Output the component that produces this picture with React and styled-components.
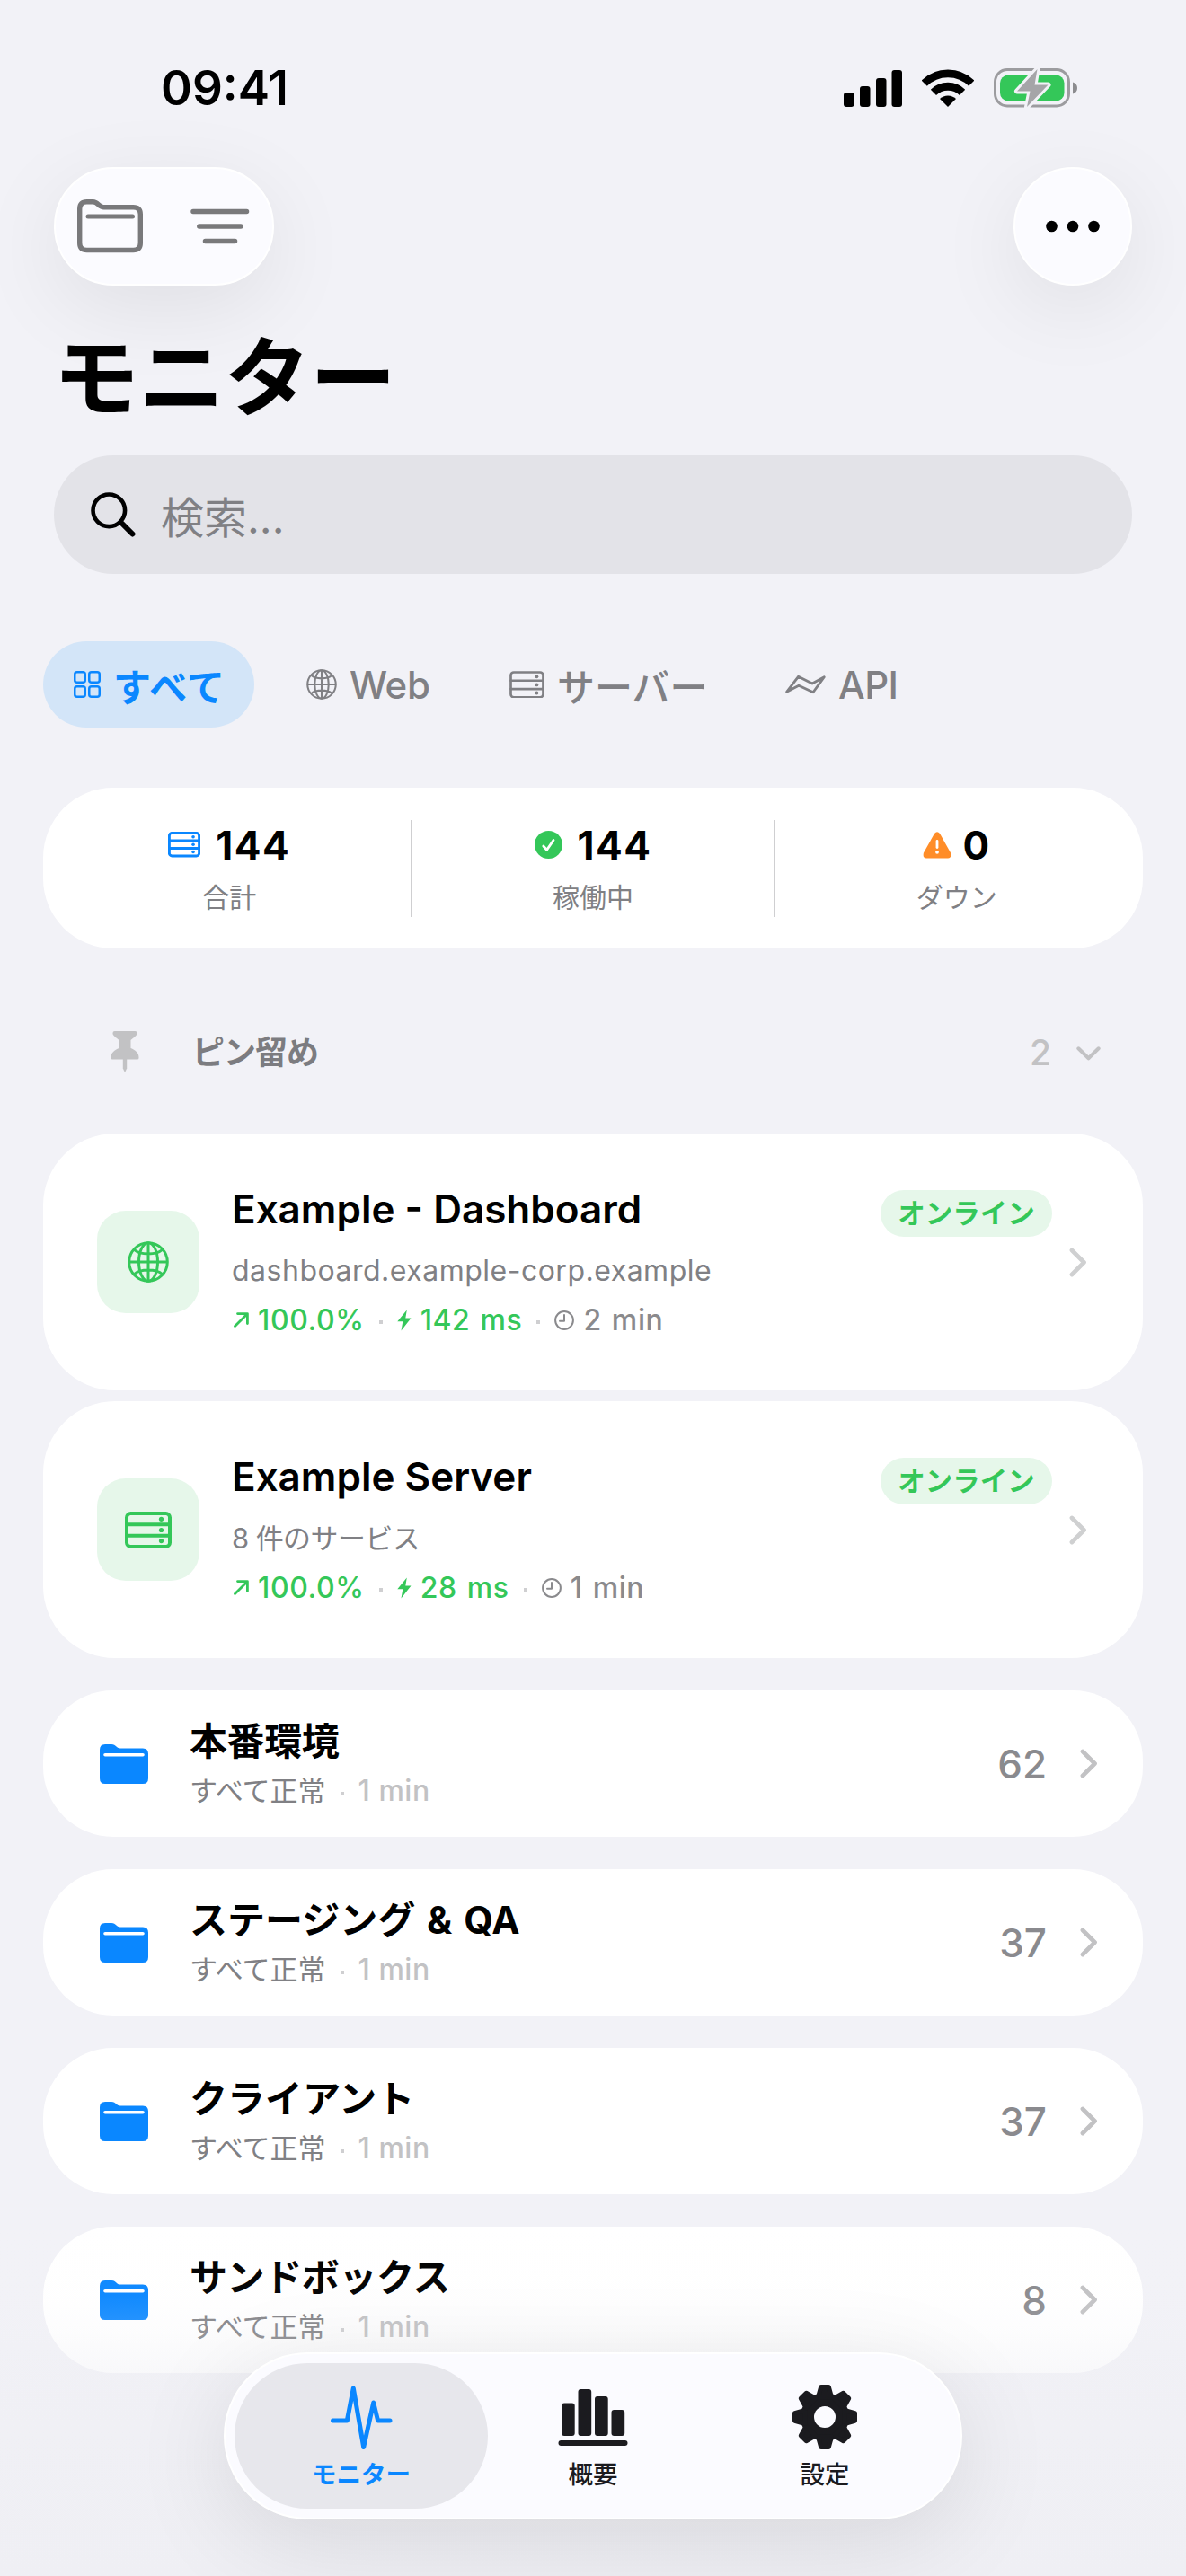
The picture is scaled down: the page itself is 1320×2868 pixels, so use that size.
import styled, { createGlobalStyle, css } from "styled-components";

const GlobalStyle = createGlobalStyle`
    * {
        box-sizing: border-box;
    }
    body {
        margin: 0;
        background: #f2f2f7;
        font-family: Inter, "Noto Sans CJK JP", sans-serif;
    }
    svg {
        display: block;
        flex-shrink: 0;
    }
`;

const blue = "#0a87ff";
const green = "#34c759";
const gray = "#808084";
const lightGray = "#c2c2c4";

const Screen = styled.main`
    position: relative;
    display: flex;
    flex-direction: column;
    width: 1320px;
    height: 2868px;
    overflow: hidden;
    background: #f2f2f7;
    color: #000;
    white-space: nowrap;
`;
const StatusBar = styled.div`
    display: flex;
    align-items: center;
    justify-content: space-between;
    height: 186px;
    padding: 10px 120px 0 179px;
`;
const Time = styled.span`
    font-size: 53px;
    font-weight: 600;
    line-height: 60px;
`;
const StatusIcons = styled.div`
    display: flex;
    align-items: center;
    gap: 22px;
`;
const Toolbar = styled.div`
    display: flex;
    justify-content: space-between;
    padding: 0 60px;
`;
const glass = css`
    background: #fbfbff;
    border: 2px solid #fff;
    box-shadow: 0 24px 96px rgba(0, 0, 0, 0.08);
`;
const ToolGroup = styled.div`
    ${glass}
    display: flex;
    align-items: center;
    justify-content: space-between;
    width: ${props => props.$round ? 132 : 245}px;
    height: 132px;
    padding: ${props => props.$round ? "0 34px" : "0 25px 0 24px"};
    border-radius: 66px;
`;
const Title = styled.h1`
    margin: 47px 0 32px 59px;
    font-size: 96px;
    font-weight: 700;
    line-height: 110px;
    letter-spacing: -0.7px;
`;
const Search = styled.div`
    display: flex;
    align-items: center;
    gap: 28px;
    height: 132px;
    margin: 0 60px;
    padding: 0 41px;
    border-radius: 66px;
    background: #e3e3e8;
    color: ${gray};
    font-size: 48px;
`;
const Chips = styled.div`
    display: flex;
    gap: 24px;
    margin: 75px 48px 0;
`;
const Chip = styled.div`
    display: flex;
    align-items: center;
    gap: 14px;
    width: ${props => props.$width}px;
    height: 96px;
    padding-left: 34px;
    border-radius: 48px;
    background: ${props => props.$active ? "#d3e5f8" : "transparent"};
    color: ${props => props.$active ? blue : gray};
    font-size: 42px;
    font-weight: ${props => props.$active ? 700 : 500};
`;
const ChipText = styled.span`
    letter-spacing: ${props => props.$spacing || 0}px;
`;
const Stats = styled.section`
    display: flex;
    align-items: center;
    height: 179px;
    margin: 67px 48px 0;
    padding: 0 6px;
    border-radius: 78px;
    background: #fff;
`;
const Stat = styled.div`
    display: flex;
    flex: 1;
    flex-direction: column;
    align-items: center;
    height: 108px;
    padding-top: 1px;

    & + & {
        border-left: 2px solid #cfcfd1;
    }
`;
const StatValue = styled.div`
    display: flex;
    align-items: center;
    gap: ${props => props.$gap || 17}px;
    height: 54px;
    font-size: 44px;
    font-weight: 700;
    letter-spacing: 1.5px;

    svg {
        color: ${blue};
    }
`;
const StatLabel = styled.div`
    margin-top: 9px;
    font-size: 30px;
    line-height: 44px;
    color: ${gray};
`;
const SectionHeader = styled.div`
    display: flex;
    align-items: center;
    height: 206px;
    padding: 24px 95px 0 123px;
    color: ${lightGray};
`;
const SectionTitle = styled.h2`
    flex: 1;
    margin: -4px 0 0 59px;
    font-size: 36px;
    font-weight: 700;
    letter-spacing: -1px;
    color: #7c7c80;
`;
const SectionCount = styled.span`
    margin-right: 28px;
    font-size: 39px;
    font-weight: 500;
`;
const List = styled.div`
    display: flex;
    flex-direction: column;
    gap: ${props => props.$gap}px;
    margin: ${props => props.$top || 0}px 48px 0;
`;
const MonitorCard = styled.article`
    display: flex;
    align-items: center;
    height: 286px;
    padding: 0 62px 0 60px;
    border-radius: 80px;
    background: #fff;
`;
const IconTile = styled.div`
    display: grid;
    place-items: center;
    width: 114px;
    height: 114px;
    margin-right: 36px;
    border-radius: 32px;
    background: #e6f7ea;
    color: ${green};
`;
const MonitorInfo = styled.div`
    flex: 1;
`;
const MonitorName = styled.h3`
    margin: -1px 0 0;
    font-size: 44px;
    font-weight: 600;
    line-height: 54px;
`;
const MonitorSub = styled.p`
    margin: 21px 0 13px;
    font-size: ${props => props.$size || 32}px;
    line-height: 42px;
    letter-spacing: ${props => props.$spacing || 0}px;
    color: ${gray};
`;
const Metrics = styled.div`
    display: flex;
    align-items: center;
    height: 42px;
    padding-left: 2px;
    font-size: 32px;
    font-weight: 500;
    letter-spacing: 0.6px;
    word-spacing: 2px;
`;
const Metric = styled.span`
    display: flex;
    align-items: center;
    gap: 10px;
    color: ${props => props.$muted ? "#8a8a8d" : green};
`;
const Dot = styled.i`
    width: 4px;
    height: 4px;
    margin: 5px 16px 0;
    background: #cfcfd1;
`;
const Badge = styled.span`
    align-self: flex-start;
    width: 191px;
    height: 52px;
    margin: 63px 19px 0 0;
    border-radius: 26px;
    background: #e6f7ea;
    color: ${green};
    font-size: 30.5px;
    font-weight: 700;
    line-height: 51px;
    text-align: center;
`;
const FolderRow = styled.article`
    display: flex;
    align-items: center;
    height: 163px;
    padding: 0 50px 0 63px;
    border-radius: 78px;
    background: #fff;
    color: ${blue};
`;
const FolderText = styled.div`
    flex: 1;
    margin-left: 46px;
    color: #000;
`;
const FolderName = styled.h3`
    margin: 0;
    font-size: 42px;
    font-weight: 700;
    line-height: 56px;
    letter-spacing: ${props => props.$spacing || 0}px;
    word-spacing: 3px;
`;
const FolderSub = styled.div`
    display: flex;
    align-items: center;
    margin-top: 5px;
    font-size: 31px;
    line-height: 44px;
    color: ${gray};
`;
const Age = styled.span`
    font-size: 32px;
    font-weight: 500;
    letter-spacing: 0.5px;
    color: ${lightGray};
`;
const Count = styled.span`
    margin-right: 37px;
    font-size: 44px;
    font-weight: 500;
    color: #8a8a8e;
`;
// sits over the scrolling list
const BottomFade = styled.div`
    position: absolute;
    right: 0;
    bottom: 0;
    left: 0;
    height: 390px;
    background: linear-gradient(
        rgba(238, 238, 243, 0),
        rgba(238, 238, 243, 0.03) 20%,
        rgba(238, 238, 243, 0.15) 30%,
        rgba(238, 238, 243, 0.4) 42%,
        rgba(238, 238, 243, 0.75)
    );
`;
const TabBar = styled.nav`
    ${glass}
    position: absolute;
    bottom: 63px;
    left: 249px;
    display: flex;
    width: 822px;
    height: 186px;
    padding: 10px;
    border-radius: 93px;
    box-shadow: 0 24px 110px rgba(0, 0, 0, 0.1);
`;
const Tab = styled.div`
    display: flex;
    flex-direction: column;
    align-items: center;
    width: 282px;
    height: 162px;
    padding-top: 24px;
    border-radius: 81px;
    background: ${props => props.$active ? "#e7e7ec" : "transparent"};
    color: ${props => props.$active ? blue : "#1b1b1f"};
    font-size: 27.5px;
    font-weight: ${props => props.$active ? 700 : 500};

    & + & {
        margin-left: -24px;
    }
`;
const TabLabel = styled.span`
    margin-top: 8px;
    line-height: 40px;
`;

const Line = props => <path fill="none" stroke="currentColor" strokeLinecap="round" strokeLinejoin="round" {...props} />;

const Signal = () => (
    <svg width="65" height="42">
        <rect x="0" y="26" width="11.5" height="16" rx="3" />
        <rect x="18" y="19" width="11.5" height="23" rx="3" />
        <rect x="36" y="10" width="11.5" height="32" rx="3" />
        <rect x="53.5" y="1" width="11.5" height="41" rx="3" />
    </svg>
);
const Wifi = () => (
    <svg width="58" height="42" viewBox="0 0 58 42">
        <path d="M2.7 15.7A37.2 37.2 0 0 1 55.3 15.7M12.9 25.9A22.8 22.8 0 0 1 45.1 25.9" fill="none" stroke="#000" strokeWidth="8.8" />
        <path d="M20 33A13 13 0 0 1 38 33L29 42Z" />
    </svg>
);
const Battery = () => (
    <svg width="94" height="46" viewBox="0 0 94 46">
        <rect x="1.5" y="2.5" width="82" height="40.5" rx="13.5" fill="none" stroke="#9c9c9f" strokeWidth="3" />
        <path d="M88 16.5c3.5 1 5 3.5 5 6.5s-1.5 5.5-5 6.5z" fill="#8c8c8f" />
        <rect x="7" y="8.5" width="71.5" height="29" rx="9" fill={green} />
        <path d="M48.5 2L26 26.5H40.5L37 44L60.5 19.5H45.5Z" fill="#a5a5a8" stroke="#f2f2f7" strokeWidth="6" strokeLinejoin="round" paintOrder="stroke" />
    </svg>
);
const FolderOutline = () => (
    <svg width="73" height="60" viewBox="0 0 73 60" color="#79797b">
        <Line strokeWidth="5.4" d="M2.7 10.7Q2.7 2.7 10.7 2.7H17.5C23 2.7 24 8.8 29.5 8.8H62.3Q70.3 8.8 70.3 16.8V48.5Q70.3 56.5 62.3 56.5H10.7Q2.7 56.5 2.7 48.5Z" />
        <Line strokeWidth="5" d="M12 19H61.5" />
    </svg>
);
const Filter = () => (
    <svg width="66" height="40" viewBox="0 0 66 40" color="#79797b">
        <Line strokeWidth="5.5" d="M3 3.5H62.5M9.8 20H56M16.5 36.5H49.5" />
    </svg>
);
const More = () => (
    <svg width="60" height="14">
        <circle cx="6.5" cy="7" r="6.3" />
        <circle cx="30" cy="7" r="6.3" />
        <circle cx="53.5" cy="7" r="6.3" />
    </svg>
);
const Magnifier = () => (
    <svg width="50" height="50" viewBox="0 0 50 50" color="#000">
        <circle cx="20.3" cy="20.3" r="17.8" fill="none" stroke="currentColor" strokeWidth="4.6" />
        <Line strokeWidth="6" d="M34.5 34.5L46.5 46.5" />
    </svg>
);
const Grid = () => (
    <svg width="30" height="30" viewBox="0 0 30 30" fill="none" stroke="currentColor" strokeWidth="2.5">
        <rect x="1.25" y="1.25" width="11.5" height="11.5" rx="2.5" />
        <rect x="17.25" y="1.25" width="11.5" height="11.5" rx="2.5" />
        <rect x="1.25" y="17.25" width="11.5" height="11.5" rx="2.5" />
        <rect x="17.25" y="17.25" width="11.5" height="11.5" rx="2.5" />
    </svg>
);
const Globe = ({ size, stroke }) => (
    <svg width={size} height={size} viewBox="0 0 46 46">
        <circle cx="23" cy="23" r="21.3" fill="none" stroke="currentColor" strokeWidth={stroke} />
        <ellipse cx="23" cy="23" rx="10.5" ry="21.3" fill="none" stroke="currentColor" strokeWidth={stroke} />
        <Line strokeWidth={stroke} strokeLinecap="butt" d="M23 2V44M2 23H44M7.5 9.5C14 15.5 32 15.5 38.5 9.5M7.5 36.5C14 30.5 32 30.5 38.5 36.5" />
    </svg>
);
const Server = ({ width, stroke = 4 }) => (
    <svg width={width} height={width * 41 / 52} viewBox="0 0 52 41">
        <rect x="2" y="2" width="48" height="37" rx="4.5" fill="none" stroke="currentColor" strokeWidth={stroke} />
        <Line strokeWidth={stroke} d="M2 14.3H50M2 26.7H50" />
        <circle cx="40.5" cy="8.3" r="2.6" fill="currentColor" />
        <circle cx="40.5" cy="20.5" r="2.6" fill="currentColor" />
        <circle cx="40.5" cy="32.6" r="2.6" fill="currentColor" />
    </svg>
);
const Zigzag = () => (
    <svg width="45" height="22" viewBox="0 0 45 22">
        <Line strokeWidth="2.8" d="M1.6 19.3L14.5 2.3L30 10L43.3 2.8L31 19.7L15 12.3Z" />
    </svg>
);
const Check = () => (
    <svg width="31" height="31" viewBox="0 0 31 31">
        <circle cx="15.5" cy="15.5" r="15.5" fill={green} />
        <Line stroke="#fff" strokeWidth="2.8" d="M9.8 17L13.6 21.3L21 10.5" />
    </svg>
);
const Warning = () => (
    <svg width="32" height="30" viewBox="0 0 32 30" fill="#ff8d28">
        <path d="M13 2Q16 -1.5 19 2L31 23.5Q32.5 29 28 29.5H4Q-.5 29 1 23.5Z" />
        <Line stroke="#fff" strokeWidth="2.8" d="M16 10.5V17.5" />
        <circle cx="16" cy="22.8" r="1.9" fill="#fff" />
    </svg>
);
const Pin = () => (
    <svg width="32" height="46" viewBox="0 0 31 46" fill="currentColor">
        <path d="M4 0H27Q29 0 29 2V3C29 5 23 9 22 10V19C27 21 31 24 31 29V30Q31 31.6 29.4 31.6H1.6Q0 31.6 0 30V29C0 24 4 21 9 19V10C8 9 2 5 2 3V2Q2 0 4 0Z" />
        <path d="M13.3 31H17.7V41.5L15.5 46L13.3 41.5Z" />
    </svg>
);
const ChevronDown = () => (
    <svg width="27" height="20" viewBox="0 -4 27 20">
        <Line strokeWidth="4" d="M2.3 2.3L13.5 13.3L24.7 2.3" />
    </svg>
);
const ChevronRight = ({ color = lightGray }) => (
    <svg width="20" height="33" viewBox="0 0 20 33" color={color}>
        <Line strokeWidth="4.8" d="M3 3L16.5 16.5L3 30" />
    </svg>
);
const ArrowUp = () => (
    <svg width="17" height="17" viewBox="0 0 17 17">
        <Line strokeWidth="2.8" d="M1.5 15.5L15.3 1.7M4.5 1.6H15.4V12.5" />
    </svg>
);
const Bolt = () => (
    <svg width="16" height="24" viewBox="0 0 16 24" fill="currentColor">
        <path d="M10.8 0.5L0.3 13.3H6.3L4.5 23.5L15.5 9.5H9.3Z" />
    </svg>
);
const Clock = () => (
    <svg width="22" height="22" viewBox="0 0 22 22">
        <circle cx="11" cy="11" r="9.9" fill="none" stroke="currentColor" strokeWidth="2" />
        <Line strokeWidth="2" d="M11 5V11.8H6" />
    </svg>
);
const Folder = () => (
    <svg width="54" height="44" viewBox="0 0 54 44">
        <path fill="currentColor" d="M0 6Q0 0 6 0H13C18.5 0 18 4.5 23 4.5H48Q54 4.5 54 10.5V38Q54 44 48 44H6Q0 44 0 38Z" />
        <Line stroke="#fff" strokeWidth="3.6" d="M6 11.8H48" />
    </svg>
);
const Pulse = () => (
    <svg width="70" height="72" viewBox="0 0 70 72">
        <Line strokeWidth="5" d="M3.5 40H19.3L26.3 4L37.7 69.5L48.7 20L53.6 40H67" />
    </svg>
);
const Bars = () => (
    <svg width="78" height="72" viewBox="0 0 78 72" fill="currentColor">
        <rect x="4" y="20.5" width="14.7" height="36.5" rx="3" />
        <rect x="22.5" y="5" width="14.7" height="52" rx="3" />
        <rect x="41" y="13" width="14.7" height="44" rx="3" />
        <rect x="59.5" y="28" width="14.7" height="29" rx="3" />
        <rect x="0.5" y="62" width="77" height="6" rx="3" />
    </svg>
);
const Gear = () => (
    <svg width="72" height="72" viewBox="-36 -36 72 72">
        <circle r="19.5" fill="none" stroke="currentColor" strokeWidth="15" />
        {[0, 45, 90, 135, 180, 225, 270, 315].map(angle => (
            <path
                key={angle}
                d="M-4.3 -33.5H4.3L7.5 -22H-7.5Z"
                fill="currentColor"
                stroke="currentColor"
                strokeWidth="5"
                strokeLinejoin="round"
                transform={`rotate(${angle})`}
            />
        ))}
    </svg>
);

const monitors = [
    { name: "Example - Dashboard", sub: "dashboard.example-corp.example", spacing: 0.5, icon: <Globe size={46} stroke={3} />, ping: "142 ms", age: "2 min" },
    { name: "Example Server", sub: "8 件のサービス", size: 31, spacing: -0.6, icon: <Server width={52} />, ping: "28 ms", age: "1 min" },
];

const folders = [
    { name: "本番環境", count: 62, spacing: -0.4 },
    { name: "ステージング & QA", count: 37 },
    { name: "クライアント", count: 37 },
    { name: "サンドボックス", count: 8, spacing: -0.4 },
];

export default () => (
    <Screen>
        <GlobalStyle />
        <StatusBar>
            <Time>09:41</Time>
            <StatusIcons>
                <Signal />
                <Wifi />
                <Battery />
            </StatusIcons>
        </StatusBar>
        <Toolbar>
            <ToolGroup>
                <FolderOutline />
                <Filter />
            </ToolGroup>
            <ToolGroup $round>
                <More />
            </ToolGroup>
        </Toolbar>
        <Title>モニター</Title>
        <Search>
            <Magnifier />
            <span>検索...</span>
        </Search>
        <Chips>
            <Chip $active $width={235}><Grid /><ChipText $spacing={1.3}>すべて</ChipText></Chip>
            <Chip $width={202}><Globe size={34} stroke={2.8} /><ChipText $spacing={-0.4}>Web</ChipText></Chip>
            <Chip $width={283}><Server width={39} stroke={3.6} /><ChipText>サーバー</ChipText></Chip>
            <Chip $width={200}><Zigzag /><ChipText $spacing={-0.6}>API</ChipText></Chip>
        </Chips>
        <Stats>
            <Stat>
                <StatValue><Server width={36} stroke={4.2} />144</StatValue>
                <StatLabel>合計</StatLabel>
            </Stat>
            <Stat>
                <StatValue><Check />144</StatValue>
                <StatLabel>稼働中</StatLabel>
            </Stat>
            <Stat>
                <StatValue $gap={13}><Warning />0</StatValue>
                <StatLabel>ダウン</StatLabel>
            </Stat>
        </Stats>
        <SectionHeader>
            <Pin />
            <SectionTitle>ピン留め</SectionTitle>
            <SectionCount>2</SectionCount>
            <ChevronDown />
        </SectionHeader>
        <List $gap={12}>
            {monitors.map(monitor => <MonitorCard key={monitor.name}>
                <IconTile>{monitor.icon}</IconTile>
                <MonitorInfo>
                    <MonitorName>{monitor.name}</MonitorName>
                    <MonitorSub $size={monitor.size} $spacing={monitor.spacing}>{monitor.sub}</MonitorSub>
                    <Metrics>
                        <Metric><ArrowUp />100.0%</Metric>
                        <Dot />
                        <Metric><Bolt />{monitor.ping}</Metric>
                        <Dot />
                        <Metric $muted><Clock />{monitor.age}</Metric>
                    </Metrics>
                </MonitorInfo>
                <Badge>オンライン</Badge>
                <ChevronRight color="#cfd0d1" />
            </MonitorCard>)}
        </List>
        <List $gap={36} $top={36}>
            {folders.map(folder => <FolderRow key={folder.name}>
                <Folder />
                <FolderText>
                    <FolderName $spacing={folder.spacing}>{folder.name}</FolderName>
                    <FolderSub>すべて正常<Dot /><Age>1 min</Age></FolderSub>
                </FolderText>
                <Count>{folder.count}</Count>
                <ChevronRight />
            </FolderRow>)}
        </List>
        <BottomFade />
        <TabBar>
            <Tab $active><Pulse /><TabLabel>モニター</TabLabel></Tab>
            <Tab><Bars /><TabLabel>概要</TabLabel></Tab>
            <Tab><Gear /><TabLabel>設定</TabLabel></Tab>
        </TabBar>
    </Screen>
);
